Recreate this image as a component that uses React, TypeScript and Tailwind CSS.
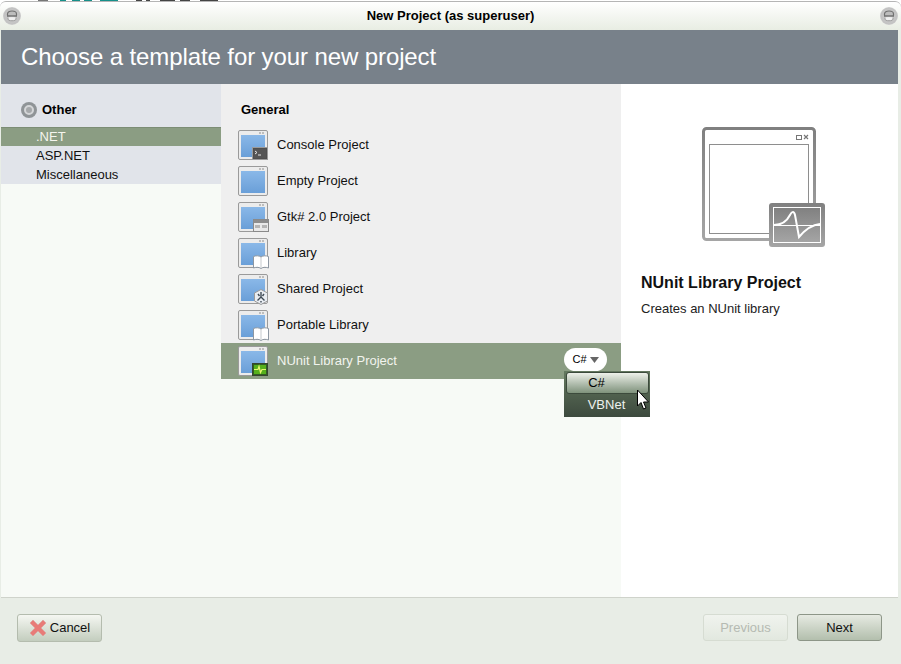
import React from "react";

const font = { fontFamily: '"Liberation Sans", Arial, sans-serif' };

function TitleButton() {
  return (
    <div className="flex h-[18px] w-[18px] items-center justify-center rounded-full bg-[radial-gradient(circle,#f4f4f4_0%,#c6c6c6_45%,#c2c2c2_62%,#e6e6e6_85%,#f2f4f0_100%)]">
      <svg width="12" height="12" viewBox="0 0 12 12">
        <path d="M1.5 5.5V4C1.5 2.2 3.5 1 6 1S10.5 2.2 10.5 4V5.5" fill="#bdbdbd" stroke="#707070" strokeWidth="1.2" />
        <path d="M1 6H11" stroke="#5c5c5c" strokeWidth="1.3" />
        <path d="M2 7.5V9C2 10 3.5 10.8 6 10.8S10 10 10 9V7.5" fill="#f0f0f0" stroke="#999" strokeWidth="1" />
      </svg>
    </div>
  );
}

type Badge = "console" | "none" | "gtk" | "book" | "shared" | "nunit";

function TemplateIcon({ badge, id }: { badge: Badge; id: string }) {
  return (
    <svg width="32" height="33" viewBox="0 0 32 33" className="shrink-0">
      <defs>
        <linearGradient id={`g${id}`} x1="0" y1="0" x2="0" y2="1">
          <stop offset="0" stopColor="#8ab8e8" />
          <stop offset="1" stopColor="#6a9fd8" />
        </linearGradient>
      </defs>
      <rect x="0.5" y="1.5" width="29" height="29" rx="1.5" fill="#ececec" stroke="#9a9a9a" />
      <rect x="3" y="6" width="24" height="22" fill={`url(#g${id})`} />
      <rect x="21" y="3" width="2" height="2" fill="#bdbdbd" />
      <rect x="24" y="3" width="2" height="2" fill="#bdbdbd" />
      {badge === "console" && (
        <g>
          <rect x="14.5" y="18.5" width="15" height="12" fill="#4f4f4f" stroke="#9a9a9a" />
          <rect x="16" y="20" width="12" height="9" fill="#555" />
          <path d="M17 22L19 23.5L17 25M20 26H23" fill="none" stroke="#e8e8e8" strokeWidth="1" />
        </g>
      )}
      {badge === "gtk" && (
        <g>
          <rect x="15.5" y="18.5" width="15" height="12" fill="#e9e9e9" stroke="#8a8a8a" />
          <rect x="16" y="19" width="14" height="3" fill="#8d8d8d" />
          <rect x="17" y="24" width="5" height="3" fill="#b5b5b5" />
          <rect x="24" y="24" width="5" height="3" fill="#b5b5b5" />
        </g>
      )}
      {badge === "book" && (
        <g>
          <path d="M15.5 19.5C18 18.5 21 18.5 23 20C25 18.5 28 18.5 30.5 19.5V31C28 30 25 30 23 31.5C21 30 18 30 15.5 31Z" fill="#fff" stroke="#8d97a2" />
          <path d="M23 20V31" stroke="#c5c9cd" />
        </g>
      )}
      {badge === "shared" && (
        <g>
          <path d="M23 16.5L29.5 20V28L23 31.5L16.5 28V20Z" fill="#e9edf2" stroke="#9a9a9a" />
          <path d="M23 19V24M23 24L19.5 27.5M23 24L26.5 27.5M20 21L21.5 23M26 21L24.5 23M23 28V29.5" fill="none" stroke="#3f4a55" strokeWidth="1.4" />
        </g>
      )}
      {badge === "nunit" && (
        <g>
          <rect x="14.5" y="18.5" width="15" height="12" fill="#2f5f22" stroke="#36452f" />
          <rect x="16" y="20" width="12" height="9" fill="#56b01c" />
          <path d="M16 24.5H20L21 21.5L22.5 27.5L24 24.5H28" fill="none" stroke="#e6f570" strokeWidth="1.2" />
        </g>
      )}
    </svg>
  );
}

function Row({ label, badge, id }: { label: string; badge: Badge; id: string }) {
  return (
    <div className="flex h-9 items-center gap-[7px] pl-[17px]">
      <TemplateIcon badge={badge} id={id} />
      <span className="text-[13px] text-[#111]">{label}</span>
    </div>
  );
}

function PreviewIcon() {
  return (
    <svg width="124" height="120" viewBox="0 0 124 120">
      <defs>
        <linearGradient id="pg" x1="0" y1="0" x2="0" y2="1">
          <stop offset="0" stopColor="#808080" />
          <stop offset="1" stopColor="#a5a5a5" />
        </linearGradient>
      </defs>
      <rect x="1.5" y="1.5" width="111" height="111" rx="3" fill="#fff" stroke="url(#pg)" strokeWidth="3" />
      <rect x="7.5" y="17.5" width="99" height="89" fill="#fff" stroke="#8e8e8e" />
      <rect x="94.5" y="8.5" width="5" height="4" fill="none" stroke="#777" />
      <path d="M102 8L106 12M106 8L102 12" stroke="#777" strokeWidth="1.2" />
      <rect x="67" y="76" width="56" height="44" rx="3" fill="url(#pg)" />
      <rect x="71.5" y="80.5" width="47" height="35" fill="url(#pg)" stroke="#fff" />
      <path d="M72 98.5H118" stroke="#fff" strokeWidth="1" />
      <path d="M72 98C80 98 85 94 88 88C90 84 92 84 93 88L97 110C102 104 108 98 118 97" fill="none" stroke="#fff" strokeWidth="2" />
    </svg>
  );
}

function CancelX() {
  return (
    <svg width="18" height="18" viewBox="0 0 18 18">
      <path d="M1 4L4 1L9 6L14 1L17 4L12 9L17 14L14 17L9 12L4 17L1 14L6 9Z" fill="#e87b78" stroke="#d9a09c" strokeWidth="0.6" />
    </svg>
  );
}

function TopSliver() {
  return (
    <svg className="absolute left-0 top-0" width="230" height="1" viewBox="0 0 230 1">
      <path d="M38 .5H48" stroke="#777" />
      <path d="M60 .5H66M72 .5H80M84 .5H92M100 .5H118" stroke="#16908a" />
      <path d="M136 .5H142M146 .5H150M160 .5H175M180 .5H190M200 .5H218" stroke="#444" />
    </svg>
  );
}

export default function App() {
  return (
    <div style={font} className="relative flex h-[664px] w-[901px] flex-col overflow-hidden bg-white">
      <TopSliver />
      <div className="mt-px flex h-[29px] shrink-0 items-center justify-between rounded-t-[6px] border-t border-[#b5b5b5] bg-gradient-to-b from-white to-[#e8ede3] pl-[3px] pr-[3px]">
        <TitleButton />
        <span className="text-[13px] font-bold text-black">New Project (as superuser)</span>
        <TitleButton />
      </div>
      <div className="flex min-h-0 flex-1 flex-col bg-[#e8ede6] pl-px pr-[3px]">
        <div className="flex h-[54px] shrink-0 items-center bg-[#78818a] pl-5">
          <h1 className="text-[24px] font-normal tracking-[-0.1px] text-white">Choose a template for your new project</h1>
        </div>
        <div className="flex min-h-0 flex-1">
          <div className="w-[220px] shrink-0 bg-[#f7faf6]">
            <div className="bg-[#e1e4ea]">
              <div className="flex h-[43px] items-center gap-[5px] pl-5 pt-[9px]">
                <div className="flex h-4 w-4 items-center justify-center rounded-full bg-[#8f9497]">
                  <div className="h-[10px] w-[10px] rounded-full border-2 border-[#d4d6d8] bg-[#a5a8aa]" />
                </div>
                <span className="text-[13px] font-bold text-black">Other</span>
              </div>
              <div className="flex h-[19px] items-center border-t border-[#7c8d75] bg-[#8b9d83] pl-[35px] text-[13px] text-[#f5f5ee]">.NET</div>
              <div className="flex h-[19px] items-center pl-[35px] text-[13px] text-[#111]">ASP.NET</div>
              <div className="flex h-[19px] items-center pl-[35px] text-[13px] text-[#111]">Miscellaneous</div>
            </div>
          </div>
          <div className="flex w-[400px] shrink-0 flex-col bg-[#f7faf6]">
            <div className="bg-[#efefef]">
              <div className="flex h-[43px] items-center pl-5 pt-[9px] text-[13px] font-bold text-black">General</div>
              <Row label="Console Project" badge="console" id="1" />
              <Row label="Empty Project" badge="none" id="2" />
              <Row label="Gtk# 2.0 Project" badge="gtk" id="3" />
              <Row label="Library" badge="book" id="4" />
              <Row label="Shared Project" badge="shared" id="5" />
              <Row label="Portable Library" badge="book" id="6" />
            </div>
            <div className="relative flex h-9 items-center gap-[7px] bg-[#8b9d83] pl-[17px]">
              <TemplateIcon badge="nunit" id="7" />
              <span className="text-[13px] text-[#f2f4ee]">NUnit Library Project</span>
              <div className="absolute left-[343px] top-[5px] flex h-[23px] w-[43px] items-center justify-center gap-[3px] rounded-full bg-white">
                <span className="text-[11px] text-black">C#</span>
                <svg width="9" height="6" viewBox="0 0 9 6"><path d="M0 0H9L4.5 6Z" fill="#666" /></svg>
              </div>
              <div className="absolute left-[343px] top-[28px] z-10 h-[46px] w-[86px] bg-gradient-to-b from-[#64785f] to-[#3d4a3e] pl-[2px] pr-px pt-px">
                <div className="flex h-[22px] items-center justify-center rounded-[3px] border border-[#3c4a3c] bg-gradient-to-b from-[#eef1ea] to-[#7f927c] pr-[22px] text-[13px] text-black">C#</div>
                <div className="flex h-[22px] items-center justify-center pr-[2px] text-[13px] text-[#eef2ee]">VBNet</div>
              </div>
              <svg className="absolute left-[415px] top-[46px] z-20" width="14" height="22" viewBox="0 0 14 22">
                <path d="M1.5 1V17L5 13.5L7.5 20L10 19L7.5 13H12.5Z" fill="#fff" stroke="#000" />
              </svg>
            </div>
          </div>
          <div className="flex min-w-0 flex-1 flex-col bg-white pl-5 pt-[43px]">
            <div className="pl-[61px]"><PreviewIcon /></div>
            <div className="mt-[24px] text-[16px] font-bold text-[#111]">NUnit Library Project</div>
            <div className="mt-[4px] text-[13px] text-[#222]">Creates an NUnit library</div>
          </div>
        </div>
        <div className="flex h-[67px] shrink-0 items-center justify-between border-t border-[#cfd3cb] pb-[7px] pl-4 pr-4">
          <button className="flex h-[28px] w-[85px] items-center justify-center gap-[3px] rounded-[3px] border border-[#b4bcae] bg-gradient-to-b from-[#f5f7f2] to-[#c3cdbe] text-[13px] text-[#111]">
            <CancelX />
            Cancel
          </button>
          <div className="flex gap-[9px]">
            <button className="h-[27px] w-[85px] rounded-[3px] border border-[#d6dcd2] bg-gradient-to-b from-[#f0f3ee] to-[#e2e8df] text-[13px] text-[#b5bab2]">Previous</button>
            <button className="h-[27px] w-[85px] rounded-[3px] border border-[#8d9688] bg-gradient-to-b from-[#e6eae2] to-[#b3bfad] text-[13px] text-[#111]">Next</button>
          </div>
        </div>
      </div>
    </div>
  );
}
